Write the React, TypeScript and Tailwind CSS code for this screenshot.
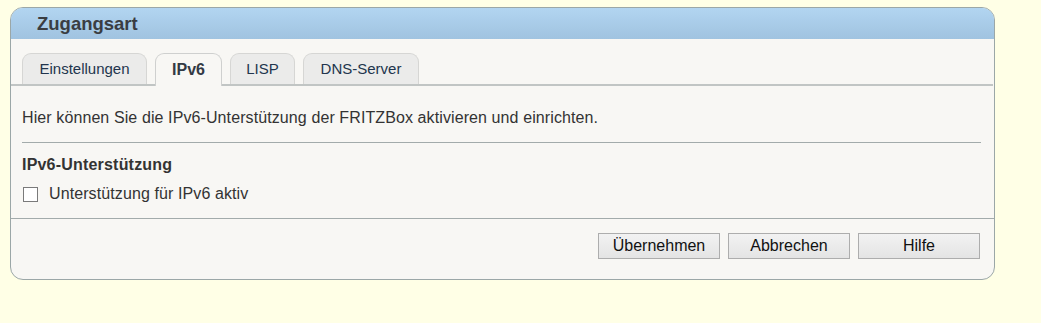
export default function App() {
  const tabs = [
    { label: 'Einstellungen', w: 'w-[125px]' },
    { label: 'IPv6', w: 'w-[67px]', active: true },
    { label: 'LISP', w: 'w-[65px]' },
    { label: 'DNS-Server', w: 'w-[116px]' },
  ];

  return (
    <div className="w-[1041px] h-[323px] bg-[#ffffe6] pt-[7px] pl-[10px] font-['Liberation_Sans',Arial,sans-serif]">
      <div className="w-[985px] h-[273px] border border-[#9ba7a7] rounded-[13px] bg-[#f8f7f4] overflow-hidden flex flex-col">
        {/* header */}
        <div className="h-[31px] bg-gradient-to-b from-[#b2d5f1] to-[#a0c3e0] flex items-center pl-[26px]">
          <span className="text-[18.5px] font-bold text-[#3a3d42]">Zugangsart</span>
        </div>

        {/* tabs */}
        <div className="mt-[14px] h-[33px] flex items-end gap-[8px] pl-[11px] border-b-2 border-[#c1c5c4] mr-[1px]">
          {tabs.map((t) => (
            <div
              key={t.label}
              className={
                t.active
                  ? `${t.w} h-[33px] -mb-[2px] rounded-t-[9px] border border-b-0 border-[#cfd0cf] bg-[#f8f7f4] flex items-center justify-center text-[16px] font-bold text-[#333a44]`
                  : `${t.w} h-[31px] rounded-t-[9px] border border-b-0 border-[#d6d6d4] bg-[#ebebea] flex items-center justify-center text-[15px] text-[#22354d]`
              }
            >
              {t.label}
            </div>
          ))}
        </div>

        {/* body */}
        <div className="pl-[11px] pr-[13px]">
          <p className="mt-[22px] text-[16px] leading-[20px] tracking-[0.1px] text-[#333]">
            Hier können Sie die IPv6-Unterstützung der FRITZBox aktivieren und einrichten.
          </p>
          <div className="mt-[14px] border-t border-[#a3abab]" />
          <h3 className="mt-[12px] text-[16px] leading-[20px] font-bold tracking-[0.2px] text-[#333]">IPv6-Unterstützung</h3>
          <label className="mt-[9px] flex items-center gap-[11px] text-[16px] leading-[20px] tracking-[0.1px] text-[#333]">
            <span className="ml-[1px] w-[15px] h-[15px] border border-[#7a7a7a] bg-white" />
            Unterstützung für IPv6 aktiv
          </label>
        </div>

        <div className="mt-[14px] border-t border-[#a3abab]" />

        {/* buttons */}
        <div className="mt-[14px] flex justify-end gap-[8px] pr-[14px]">
          {['Übernehmen', 'Abbrechen', 'Hilfe'].map((b) => (
            <button
              key={b}
              className="w-[122px] h-[26px] border border-[#adadad] bg-gradient-to-b from-[#f2f2f2] to-[#e4e4e4] text-[16px] text-[#111] flex items-center justify-center"
            >
              {b}
            </button>
          ))}
        </div>
      </div>
    </div>
  );
}
